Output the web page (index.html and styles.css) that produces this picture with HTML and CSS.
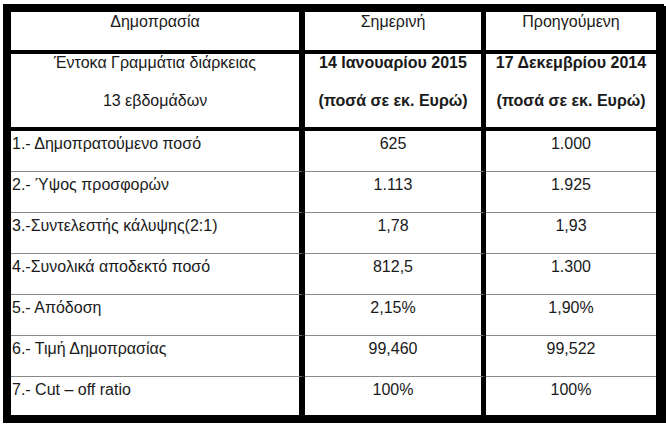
FILE: index.html
```html
<!DOCTYPE html>
<html lang="el">
<head>
<meta charset="utf-8">
<title>Δημοπρασία</title>
<link rel="stylesheet" href="styles.css">
</head>
<body>
<div class="frame">
  <div class="grid">
    <div class="cell c1 head center">Δημοπρασία</div>
    <div class="cell c2 head center">Σημερινή</div>
    <div class="cell c3 head center">Προηγούμενη</div>

    <div class="cell c1 sub center"><div class="p">Έντοκα Γραμμάτια διάρκειας</div><div class="p">13 εβδομάδων</div></div>
    <div class="cell c2 sub center bold"><div class="p">14 Ιανουαρίου 2015</div><div class="p">(ποσά σε εκ. Ευρώ)</div></div>
    <div class="cell c3 sub center bold"><div class="p">17 Δεκεμβρίου 2014</div><div class="p">(ποσά σε εκ. Ευρώ)</div></div>

    <div class="cell c1 row">1.- Δημοπρατούμενο ποσό</div>
    <div class="cell c2 row center">625</div>
    <div class="cell c3 row center">1.000</div>

    <div class="cell c1 row">2.- Ύψος προσφορών</div>
    <div class="cell c2 row center">1.113</div>
    <div class="cell c3 row center">1.925</div>

    <div class="cell c1 row">3.-Συντελεστής κάλυψης(2:1)</div>
    <div class="cell c2 row center">1,78</div>
    <div class="cell c3 row center">1,93</div>

    <div class="cell c1 row">4.-Συνολικά αποδεκτό ποσό</div>
    <div class="cell c2 row center">812,5</div>
    <div class="cell c3 row center">1.300</div>

    <div class="cell c1 row">5.- Απόδοση</div>
    <div class="cell c2 row center">2,15%</div>
    <div class="cell c3 row center">1,90%</div>

    <div class="cell c1 row">6.- Τιμή Δημοπρασίας</div>
    <div class="cell c2 row center">99,460</div>
    <div class="cell c3 row center">99,522</div>

    <div class="cell c1 row last">7.- Cut – off ratio</div>
    <div class="cell c2 row last center">100%</div>
    <div class="cell c3 row last center">100%</div>
  </div>
</div>
</body>
</html>
```

FILE: styles.css
```css
html, body {
  margin: 0;
  padding: 0;
  background: #fff;
}
body {
  font-family: "Liberation Sans", Arial, sans-serif;
  font-size: 16px;
  color: #1a1a1a;
}
.frame {
  margin: 4px 0 0 3px;
  width: 645px;
  border: 8px solid #000;
  box-shadow: 2px 2px 0 #000;
}
.grid {
  display: grid;
  grid-template-columns: 294px 181px 170px;
}
.cell {
  box-sizing: border-box;
  line-height: 16px;
  padding-left: 1px;
  white-space: nowrap;
}
.c1 { border-right: 6px solid #000; }
.c2 { border-right: 5px solid #000; }
.center { text-align: center; padding-left: 0; }
.bold { font-weight: bold; }
.head {
  height: 42px;
  padding-top: 2px;
  border-bottom: 4px solid #000;
}
.sub {
  height: 77px;
  padding-top: 1px;
  border-bottom: 4px solid #000;
}
.sub .p { margin-bottom: 22px; }
.row {
  height: 41px;
  padding-top: 5px;
  border-bottom: 1px solid #8a8a8a;
}
.row.last {
  height: 38px;
  border-bottom: 0;
}
```
